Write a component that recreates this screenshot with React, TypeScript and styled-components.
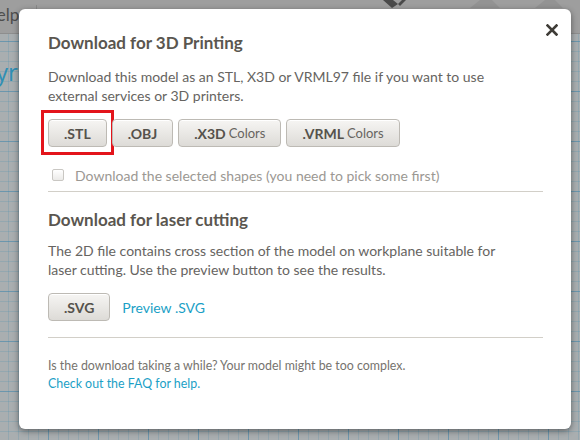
import React from "react";
import styled, { createGlobalStyle } from "styled-components";

const Global = createGlobalStyle`
  html, body { margin: 0; padding: 0; }
  body { width: 580px; height: 440px; overflow: hidden; font-family: Lato, "Open Sans", sans-serif; }
`;

const Page = styled.div`
  position: relative;
  width: 580px;
  height: 440px;
  display: flex;
  flex-direction: column;
  overflow: hidden;
`;

const Header = styled.div`
  height: 33px;
  flex: none;
  background: #9e9e9e;
  border-bottom: 1px solid #8e8e8e;
  display: flex;
  align-items: flex-start;
  position: relative;
`;

const HeaderText = styled.span`
  font-size: 17px;
  color: #4e4e4e;
  margin-left: -16px;
  margin-top: 5px;
  line-height: 20px;
  padding-right: 17px;
  border-right: 1px solid #8a8a8a;
  height: 10px;
`;

const HeaderIcons = styled.svg`
  position: absolute;
  left: 0;
  top: 0;
`;

const Grid = styled.div`
  flex: 1;
  background-color: #a9aeb0;
  background-image:
    linear-gradient(90deg, rgba(60, 130, 170, 0.45) 1px, transparent 1px),
    linear-gradient(0deg, rgba(60, 130, 170, 0.45) 1px, transparent 1px),
    linear-gradient(90deg, rgba(70, 140, 175, 0.22) 1px, transparent 1px),
    linear-gradient(0deg, rgba(70, 140, 175, 0.22) 1px, transparent 1px);
  background-size: 50px 50px, 50px 50px, 10px 10px, 10px 10px;
  background-position: -2px 8px, -2px 8px, -2px 8px, -2px 8px;
`;

const Scribble = styled.span`
  display: block;
  margin: 26px 0 0 -4px;
  font-size: 24px;
  line-height: 24px;
  color: #2f8fb5;
  font-family: "Open Sans", sans-serif;
`;

const Modal = styled.div`
  position: absolute;
  left: 19px;
  top: 9px;
  width: 552px;
  height: 420px;
  box-sizing: border-box;
  background: #ffffff;
  border-radius: 6px;
  box-shadow: 0 2px 6px rgba(0, 0, 0, 0.45);
  padding: 23px 28px 0 29px;
  display: flex;
  flex-direction: column;
  font-family: Lato, "Open Sans", sans-serif;
`;

const Close = styled.button`
  position: absolute;
  right: 12px;
  top: 13px;
  width: 15px;
  height: 15px;
  padding: 0;
  border: 0;
  background: transparent;
  display: flex;
  align-items: center;
  justify-content: center;
`;

const Title = styled.h2<{ $gap?: number }>`
  margin: ${(p) => p.$gap ?? 0}px 0 0;
  font-size: 17px;
  line-height: 22px;
  font-weight: 700;
  color: #5a564f;
`;

const Para = styled.p<{ $gap: number }>`
  margin: ${(p) => p.$gap}px 0 0;
  font-size: 14px;
  line-height: 19px;
  color: #666461;
`;

const ButtonRow = styled.div<{ $gap: number }>`
  display: flex;
  align-items: center;
  gap: 5px;
  margin-top: ${(p) => p.$gap}px;
`;

const Btn = styled.button`
  position: relative;
  height: 28px;
  padding: 0 15px;
  border: 1px solid #bdbab4;
  border-radius: 4px;
  background: linear-gradient(#f6f5f3, #dddbd7);
  box-shadow: inset 0 1px 0 #ffffff;
  font-family: Lato, "Open Sans", sans-serif;
  font-size: 14px;
  font-weight: 700;
  color: #55524c;
  display: flex;
  align-items: center;
  gap: 3px;
  cursor: pointer;
`;

const Light = styled.span`
  font-weight: 400;
  font-size: 13px;
  color: #67645f;
`;

const Highlight = styled.span`
  position: absolute;
  left: -8px;
  top: -10px;
  right: -8px;
  bottom: -9px;
  border: 3px solid #e3141b;
  pointer-events: none;
`;

const CheckRow = styled.label`
  display: flex;
  align-items: center;
  gap: 11px;
  margin-top: 18px;
  padding-left: 4px;
  height: 20px;
  font-size: 14px;
  color: #9b9893;
`;

const Box = styled.span`
  width: 10px;
  height: 10px;
  border: 1px solid #c9c7c3;
  border-radius: 2px;
  background: linear-gradient(#ffffff, #ebeae8);
`;

const Divider = styled.hr<{ $gap: number }>`
  margin: ${(p) => p.$gap}px 0 0;
  border: 0;
  border-top: 1px solid #d2cfc8;
  height: 0;
`;

const Link = styled.a<{ $size?: number }>`
  color: #1b9fc6;
  text-decoration: none;
  font-size: ${(p) => p.$size ?? 14}px;
  cursor: pointer;
`;

const Footer = styled.p`
  margin: 19px 0 0;
  font-size: 12.4px;
  line-height: 18px;
  color: #76736e;
`;

export default function App() {
  return (
    <>
      <Global />
      <Page>
        <Header>
          <HeaderText>Help</HeaderText>
          <HeaderIcons width="580" height="10" viewBox="0 0 580 10">
            <path d="M383 0 L392 8 L398 4 L393 0 Z" fill="#4a4a4a" />
            <path d="M402 0 L398 4 L400 6 L406 0 Z" fill="#4a4a4a" />
            <path d="M470 8 L480 0 L492 0 L500 8 Z" fill="#939393" />
            <path d="M535 8 L545 0 L555 0 L563 8 Z" fill="#939393" />
          </HeaderIcons>
        </Header>
        <Grid>
          <Scribble>yr</Scribble>
        </Grid>
        <Modal role="dialog">
          <Close aria-label="Close">
            <svg width="12" height="12" viewBox="0 0 12 12">
              <path d="M1.5 1.5 L10.5 10.5 M10.5 1.5 L1.5 10.5" stroke="#3f3c37" strokeWidth="2.6" strokeLinecap="square" />
            </svg>
          </Close>
          <Title>Download for 3D Printing</Title>
          <Para $gap={13}>
            Download this model as an STL, X3D or VRML97 file if you want to use
            <br />
            external services or 3D printers.
          </Para>
          <ButtonRow $gap={14}>
            <Btn>
              .STL
              <Highlight />
            </Btn>
            <Btn>.OBJ</Btn>
            <Btn>
              .X3D <Light>Colors</Light>
            </Btn>
            <Btn>
              .VRML <Light>Colors</Light>
            </Btn>
          </ButtonRow>
          <CheckRow>
            <Box />
            Download the selected shapes (you need to pick some first)
          </CheckRow>
          <Divider $gap={6} />
          <Title $gap={17}>Download for laser cutting</Title>
          <Para $gap={10}>
            The 2D file contains cross section of the model on workplane suitable for
            <br />
            laser cutting. Use the preview button to see the results.
          </Para>
          <ButtonRow $gap={14}>
            <Btn>.SVG</Btn>
            <Link style={{ marginLeft: 7 }}>Preview .SVG</Link>
          </ButtonRow>
          <Divider $gap={16} />
          <Footer>
            Is the download taking a while? Your model might be too complex.
            <br />
            <Link $size={12.4}>Check out the FAQ for help.</Link>
          </Footer>
        </Modal>
      </Page>
    </>
  );
}
